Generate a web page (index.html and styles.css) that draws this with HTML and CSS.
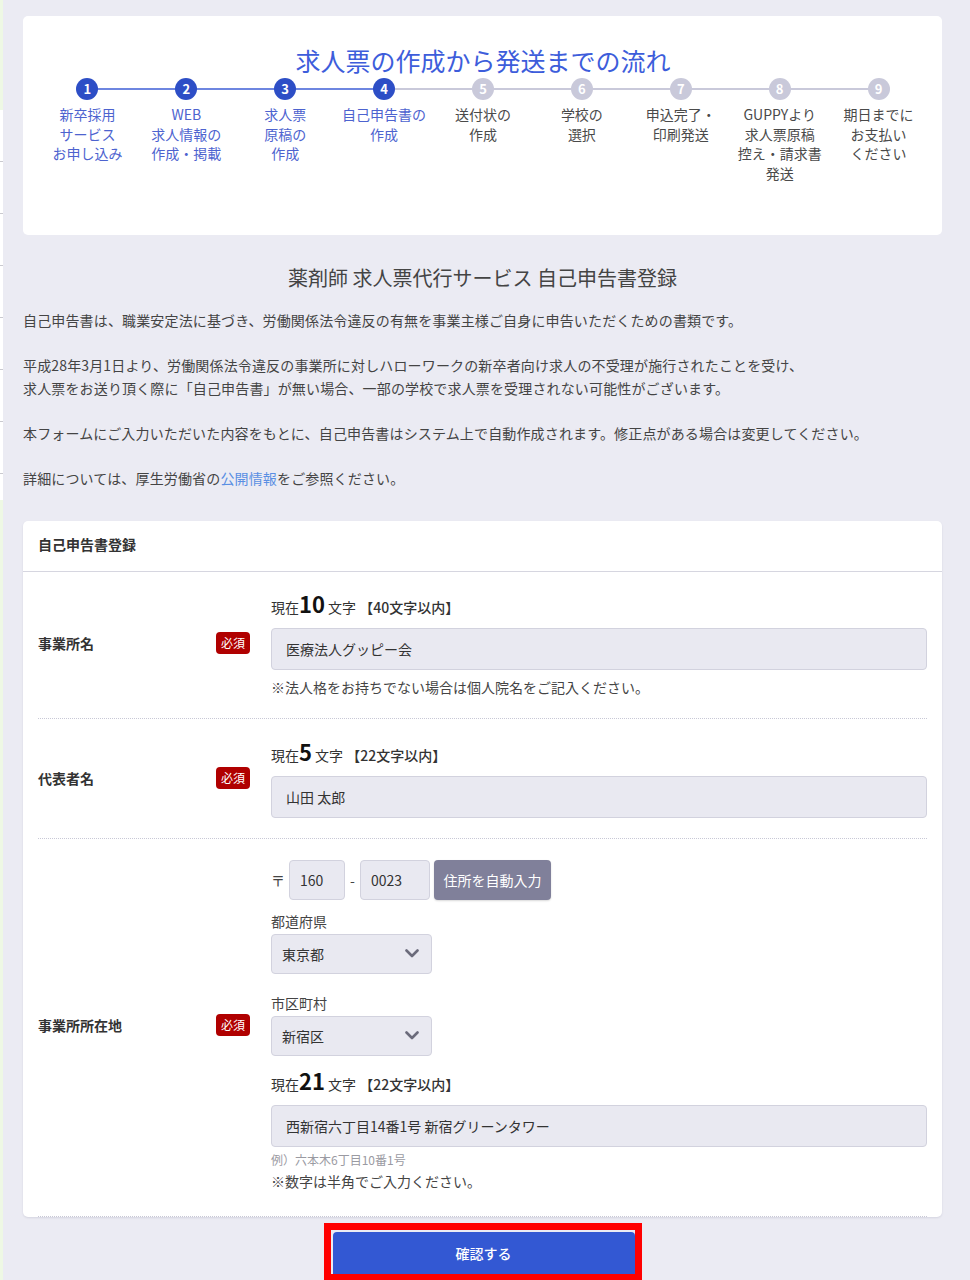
FILE: index.html
```html
<!DOCTYPE html>
<html lang="ja">
<head>
<meta charset="utf-8">
<title>薬剤師 求人票代行サービス 自己申告書登録</title>
<link rel="stylesheet" href="styles.css">
</head>
<body>
<aside class="edge"><div class="edge-list"></div></aside>
<main class="page">

  <section class="flow-card">
    <h2 class="flow-title">求人票の作成から発送までの流れ</h2>
    <ol class="steps">
      <li class="step done"><span class="dot">1</span><span class="step-label">新卒採用<br>サービス<br>お申し込み</span></li>
      <li class="step done"><span class="dot">2</span><span class="step-label">WEB<br>求人情報の<br>作成・掲載</span></li>
      <li class="step done"><span class="dot">3</span><span class="step-label">求人票<br>原稿の<br>作成</span></li>
      <li class="step done"><span class="dot">4</span><span class="step-label">自己申告書の<br>作成</span></li>
      <li class="step"><span class="dot">5</span><span class="step-label">送付状の<br>作成</span></li>
      <li class="step"><span class="dot">6</span><span class="step-label">学校の<br>選択</span></li>
      <li class="step"><span class="dot">7</span><span class="step-label">申込完了・<br>印刷発送</span></li>
      <li class="step"><span class="dot">8</span><span class="step-label">GUPPYより<br>求人票原稿<br>控え・請求書<br>発送</span></li>
      <li class="step"><span class="dot">9</span><span class="step-label">期日までに<br>お支払い<br>ください</span></li>
    </ol>
  </section>

  <h1 class="page-title">薬剤師 求人票代行サービス 自己申告書登録</h1>

  <div class="intro">
    <p>自己申告書は、職業安定法に基づき、労働関係法令違反の有無を事業主様ご自身に申告いただくための書類です。</p>
    <p>平成28年3月1日より、労働関係法令違反の事業所に対しハローワークの新卒者向け求人の不受理が施行されたことを受け、<br>求人票をお送り頂く際に「自己申告書」が無い場合、一部の学校で求人票を受理されない可能性がございます。</p>
    <p>本フォームにご入力いただいた内容をもとに、自己申告書はシステム上で自動作成されます。修正点がある場合は変更してください。</p>
    <p>詳細については、厚生労働省の<a class="link" href="#">公開情報</a>をご参照ください。</p>
  </div>

  <form class="form-card">
    <div class="form-head">自己申告書登録</div>
    <div class="form-body">

      <div class="row row-name">
        <div class="row-label"><span>事業所名</span><span class="badge">必須</span></div>
        <div class="row-field">
          <div class="counter">現在<b class="count">10</b> 文字 <span class="limit">【40文字以内】</span></div>
          <input class="text-input" type="text" value="医療法人グッピー会">
          <div class="note">※法人格をお持ちでない場合は個人院名をご記入ください。</div>
        </div>
      </div>

      <div class="row row-rep">
        <div class="row-label"><span>代表者名</span><span class="badge">必須</span></div>
        <div class="row-field">
          <div class="counter">現在<b class="count">5</b> 文字 <span class="limit">【22文字以内】</span></div>
          <input class="text-input" type="text" value="山田 太郎">
        </div>
      </div>

      <div class="row row-address">
        <div class="row-label"><span>事業所所在地</span><span class="badge">必須</span></div>
        <div class="row-field">
          <div class="postal">
            <span class="postal-mark">〒</span>
            <input class="zip zip-a" type="text" value="160">
            <span class="postal-dash">-</span>
            <input class="zip zip-b" type="text" value="0023">
            <button class="auto-btn" type="button">住所を自動入力</button>
          </div>
          <div class="field-label">都道府県</div>
          <div class="select"><span>東京都</span>
            <svg class="chevron" width="14" height="9" viewBox="0 0 14 9"><path d="M1.5 1.5 7 7l5.5-5.5" fill="none" stroke="#6b6b7b" stroke-width="2.6" stroke-linecap="round" stroke-linejoin="round"/></svg>
          </div>
          <div class="field-label field-label-gap">市区町村</div>
          <div class="select"><span>新宿区</span>
            <svg class="chevron" width="14" height="9" viewBox="0 0 14 9"><path d="M1.5 1.5 7 7l5.5-5.5" fill="none" stroke="#6b6b7b" stroke-width="2.6" stroke-linecap="round" stroke-linejoin="round"/></svg>
          </div>
          <div class="counter counter-gap">現在<b class="count">21</b> 文字 <span class="limit">【22文字以内】</span></div>
          <input class="text-input" type="text" value="西新宿六丁目14番1号 新宿グリーンタワー">
          <div class="example">例）六本木6丁目10番1号</div>
          <div class="note note-tight">※数字は半角でご入力ください。</div>
        </div>
      </div>

    </div>
  </form>

  <div class="submit-area">
    <div class="submit-frame">
      <button class="submit-btn" type="button">確認する</button>
    </div>
  </div>

</main>
</body>
</html>
```

FILE: styles.css
```css
* {
  box-sizing: border-box;
}

html, body {
  margin: 0;
  padding: 0;
}

body {
  display: flex;
  min-height: 1280px;
  background: #ebebf3;
  font-family: "Noto Sans CJK JP", "Noto Sans", sans-serif;
  color: #444;
  font-size: 14px;
}

/* thin sidebar edge on the far left */
.edge {
  width: 3px;
  flex: 0 0 3px;
  background: #eef8e4;
}

.edge-list {
  margin-top: 110px;
  height: 390px;
  background: repeating-linear-gradient(to bottom, #ffffff 0 51px, #c9c9cf 51px 52px);
}

.page {
  flex: 1;
  padding: 16px 28px 0 20px;
}

/* ---------- flow card ---------- */
.flow-card {
  background: #fff;
  border-radius: 5px;
  padding: 29px 14px 51px 15px;
}

.flow-title {
  margin: 0;
  text-align: center;
  font-size: 25px;
  line-height: 30px;
  font-weight: 400;
  color: #3d5ddb;
}

.steps {
  list-style: none;
  margin: 3px 0 0;
  padding: 0;
  display: grid;
  grid-template-columns: repeat(9, 1fr);
}

.step {
  position: relative;
  display: flex;
  flex-direction: column;
  align-items: center;
  text-align: center;
}

/* connector drawn from the previous step's dot */
.step + .step::before {
  content: "";
  position: absolute;
  top: 10px;
  left: -50%;
  width: 100%;
  height: 2px;
  background: #c9c9da;
}

.step.done + .step.done::before {
  background: #6e86e0;
}

.dot {
  position: relative;
  z-index: 1;
  width: 22px;
  height: 22px;
  border-radius: 50%;
  background: #c9c9da;
  color: #fff;
  font-size: 13px;
  font-weight: 700;
  line-height: 22px;
  text-align: center;
}

.step.done .dot {
  background: #2d4ec6;
}

.step-label {
  margin-top: 5px;
  font-size: 14px;
  line-height: 19.7px;
  color: #4a4a4a;
}

.step.done .step-label {
  color: #4d63cf;
}

/* ---------- intro ---------- */
.page-title {
  margin: 29px 0 17px;
  text-align: center;
  font-size: 20px;
  line-height: 28px;
  font-weight: 400;
  color: #444;
}

.intro p {
  margin: 0 0 22px;
  font-size: 14px;
  line-height: 23px;
  letter-spacing: 0.15px;
  color: #444;
}

.intro p:last-child {
  margin-bottom: 0;
}

.link {
  color: #5a8fe3;
  text-decoration: none;
}

/* ---------- form card ---------- */
.form-card {
  margin: 31px 0 0;
  background: #fff;
  border-radius: 5px;
  box-shadow: 0 1px 2px rgba(60, 60, 90, 0.12);
}

.form-head {
  height: 51px;
  padding: 0 15px;
  line-height: 47px;
  font-size: 14px;
  font-weight: 700;
  color: #333;
  border-bottom: 1px solid #d6d6e0;
}

.form-body {
  padding: 0 15px;
}

.row {
  display: grid;
  grid-template-columns: 212px 1fr;
  column-gap: 21px;
  border-bottom: 1px dotted #c8c8d6;
}

.row-name {
  padding: 18px 0 21px;
}

.row-rep {
  padding: 19px 0 20px;
}

.row-address {
  padding: 21px 0 25px;
}

.row-label {
  display: flex;
  align-items: center;
  justify-content: space-between;
  font-size: 14px;
  font-weight: 700;
  color: #333;
}

.badge {
  width: 34px;
  height: 22px;
  border-radius: 4px;
  background: #b00000;
  color: #fff;
  font-size: 12px;
  font-weight: 400;
  line-height: 22px;
  text-align: center;
}

.row-field {
  display: flex;
  flex-direction: column;
  align-items: flex-start;
}

.counter {
  height: 26px;
  line-height: 26px;
  font-size: 14px;
  color: #333;
}

.count {
  font-size: 22px;
  font-weight: 700;
  color: #111;
}

.limit {
  font-weight: 500;
}

.counter-gap {
  margin-top: 11px;
}

.text-input {
  width: 100%;
  height: 42px;
  margin-top: 12px;
  padding: 0 14px;
  border: 1px solid #d2d2de;
  border-radius: 4px;
  background: #e9e9f1;
  font-family: inherit;
  font-size: 14px;
  color: #333;
}

.note {
  margin-top: 7px;
  font-size: 14px;
  line-height: 20px;
  color: #444;
}

.note-tight {
  margin-top: 3px;
}

.example {
  margin-top: 5px;
  font-size: 12px;
  line-height: 16px;
  color: #9a9aa2;
}

/* postal code line */
.postal {
  display: flex;
  align-items: center;
  height: 40px;
}

.postal-mark {
  width: 18px;
  color: #444;
}

.zip {
  height: 40px;
  padding: 0 10px;
  border: 1px solid #d2d2de;
  border-radius: 4px;
  background: #e9e9f1;
  font-family: inherit;
  font-size: 14px;
  color: #333;
}

.zip-a {
  width: 56px;
}

.zip-b {
  width: 70px;
}

.postal-dash {
  width: 15px;
  text-align: center;
  color: #444;
}

.auto-btn {
  margin-left: 4px;
  width: 117px;
  height: 40px;
  border: 0;
  border-radius: 4px;
  background: #80809a;
  color: #fff;
  font-family: inherit;
  font-size: 14px;
  box-shadow: 0 1px 2px rgba(0, 0, 0, 0.15);
}

.field-label {
  margin-top: 11px;
  font-size: 14px;
  line-height: 20px;
  color: #444;
}

.field-label-gap {
  margin-top: 19px;
}

.select {
  margin-top: 3px;
  width: 161px;
  height: 40px;
  padding: 0 12px 0 10px;
  display: flex;
  align-items: center;
  justify-content: space-between;
  border: 1px solid #d2d2de;
  border-radius: 4px;
  background: #e9e9f1;
  font-size: 14px;
  color: #333;
}

/* ---------- submit ---------- */
.submit-area {
  display: flex;
  justify-content: center;
  margin-top: 6px;
}

.submit-frame {
  border: 7px solid #ff0000;
  padding: 2px 0 0 2px;
}

.submit-btn {
  display: block;
  width: 302px;
  height: 42px;
  border: 0;
  border-radius: 4px 4px 0 0;
  background: #3358d3;
  color: #fff;
  font-family: inherit;
  font-size: 14px;
  font-weight: 500;
}
```
